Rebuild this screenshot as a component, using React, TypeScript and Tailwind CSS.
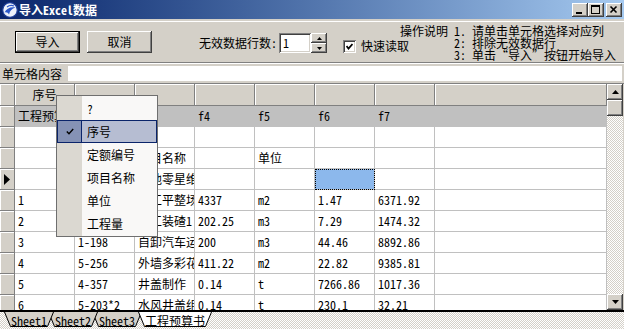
import React from 'react';

const raised =
  'shadow-[inset_-1px_-1px_0_#404040,inset_1px_1px_0_#ffffff,inset_-2px_-2px_0_#808080,inset_2px_2px_0_#d4d0c8]';
const sunken =
  'shadow-[inset_1px_1px_0_#808080,inset_-1px_-1px_0_#ffffff,inset_2px_2px_0_#404040,inset_-2px_-2px_0_#d4d0c8]';
const hatch = 'bg-[repeating-conic-gradient(#d4d0c8_0_25%,#ffffff_0_50%)] bg-[length:2px_2px]';
const headCell = 'bg-[#d4d0c8] border-r border-b border-[#808080] shadow-[inset_1px_1px_0_#ffffff]';

type Row = { cells: string[]; gray?: boolean; current?: boolean; selected?: number };

const rows: Row[] = [
  { cells: ['工程预算书', '', '', 'f4', 'f5', 'f6', 'f7', ''], gray: true },
  { cells: ['', '', '', '', '', '', '', ''] },
  { cells: ['', '定额编号', '项目名称', '', '单位', '', '', ''] },
  { cells: ['', '', '其他零星维修', '', '', '', '', ''], current: true, selected: 5 },
  { cells: ['1', '1-1', '人工平整场地', '4337', 'm2', '1.47', '6371.92', ''] },
  { cells: ['2', '1-47', '人工装碴1', '202.25', 'm3', '7.29', '1474.32', ''] },
  { cells: ['3', '1-198', '自卸汽车运土', '200', 'm3', '44.46', '8892.86', ''] },
  { cells: ['4', '5-256', '外墙多彩花纹涂料', '411.22', 'm2', '22.82', '9385.81', ''] },
  { cells: ['5', '4-357', '井盖制作', '0.14', 't', '7266.86', '1017.36', ''] },
  { cells: ['6', '5-203*2', '水风井盖组装', '0.14', 't', '230.1', '32.21', ''] },
];

const menuItems = ['?', '序号', '定额编号', '项目名称', '单位', '工程量'];

const colW = (i: number) => (i === 7 ? 'w-[172px]' : 'w-[60px]');

function AppIcon() {
  return (
    <svg width="16" height="16" viewBox="0 0 16 16">
      <circle cx="8" cy="8" r="7.3" fill="#eef2fb" stroke="#1c3c98" strokeWidth="1.2" />
      <path d="M2.5 10.5 C4.5 6.5 8.5 4.5 13.5 5.5 C10 6.5 8 8.5 7 12.5 C6 10.5 4.5 10 2.5 10.5 Z" fill="#2c58c9" />
      <path d="M5 5 C7 3.5 10 3.2 12 4" stroke="#2c58c9" strokeWidth="1.2" fill="none" />
    </svg>
  );
}

function WinBtn({ kind }: { kind: 'min' | 'max' | 'close' }) {
  return (
    <div className={`w-[16px] h-[14px] bg-[#d4d0c8] ${raised} flex items-center justify-center`}>
      <svg width="16" height="14" viewBox="0 0 16 14">
        {kind === 'min' && <rect x="4" y="9" width="6" height="2" fill="#000" />}
        {kind === 'max' && (
          <g fill="none" stroke="#000">
            <rect x="3.5" y="2.5" width="8" height="8" />
            <line x1="3" y1="3.5" x2="12" y2="3.5" />
          </g>
        )}
        {kind === 'close' && (
          <g stroke="#000" strokeWidth="1.6">
            <line x1="4.5" y1="3.5" x2="10.5" y2="9.5" />
            <line x1="10.5" y1="3.5" x2="4.5" y2="9.5" />
          </g>
        )}
      </svg>
    </div>
  );
}

function Arrow({ dir }: { dir: 'up' | 'down' }) {
  return (
    <svg width="7" height="4" viewBox="0 0 7 4">
      <polygon points={dir === 'up' ? '3.5,0 7,4 0,4' : '0,0 7,0 3.5,4'} fill="#000" />
    </svg>
  );
}

function Tab({ label, w, active, z, first }: { label: string; w: number; active?: boolean; z: string; first?: boolean }) {
  const pts = `0.5,0 6.5,14.5 ${w - 6.5},14.5 ${w - 0.5},0`;
  return (
    <div
      className={`relative h-[16px] flex items-center justify-center ${z} ${first ? '' : active ? '-ml-[4px]' : '-ml-[6px]'}`}
      style={{ width: w }}
    >
      <svg className="absolute inset-0" width={w} height="16" viewBox={`0 0 ${w} 16`}>
        <polygon points={pts} fill={active ? '#ffffff' : '#d4d0c8'} />
        <polyline points={pts} fill="none" stroke="#000" />
      </svg>
      <span className="relative leading-[14px] mt-[1px]">{label}</span>
    </div>
  );
}

export default function App() {
  return (
    <div className="relative w-[624px] h-[329px] overflow-hidden bg-[#d4d0c8] flex flex-col text-[12px] leading-[14px] text-black font-['Noto_Sans_Mono_CJK_SC','Noto_Sans_CJK_SC',sans-serif]">
      {/* title bar */}
      <div className="h-[19px] shrink-0 flex items-center bg-linear-to-r from-[#0a246a] to-[#a6caf0] px-[2px]">
        <AppIcon />
        <span className="ml-[1px] text-white font-bold">导入Excel数据</span>
        <div className="ml-auto flex items-center">
          <WinBtn kind="min" />
          <WinBtn kind="max" />
          <div className="w-[2px]" />
          <WinBtn kind="close" />
        </div>
      </div>

      {/* toolbar */}
      <div className="mt-[2px] h-[43px] shrink-0 flex items-start border-b border-white shadow-[inset_0_1px_0_#ffffff,inset_0_-1px_0_#808080]">
        <div className="ml-[15px] mt-[10px] w-[65px] h-[22px] border border-black">
          <div className={`w-full h-full flex items-center justify-center ${raised}`}>导入</div>
        </div>
        <div className={`ml-[7px] mt-[10px] w-[65px] h-[22px] flex items-center justify-center ${raised}`}>取消</div>
        <div className="ml-[47px] mt-[15px] w-[78px] whitespace-nowrap">无效数据行数:</div>
        <div className={`ml-[2px] mt-[12px] w-[32px] h-[20px] bg-white ${sunken} flex items-center pl-[4px]`}>1</div>
        <div className="mt-[12px] w-[16px] h-[20px] flex flex-col">
          <div className={`h-[10px] flex items-center justify-center ${raised}`}>
            <svg width="5" height="3" viewBox="0 0 5 3"><polygon points="2.5,0 5,3 0,3" fill="#000" /></svg>
          </div>
          <div className={`h-[10px] flex items-center justify-center ${raised}`}>
            <svg width="5" height="3" viewBox="0 0 5 3"><polygon points="0,0 5,0 2.5,3" fill="#000" /></svg>
          </div>
        </div>
        <div className="ml-[16px] mt-[18px] w-[57px] flex items-center whitespace-nowrap">
          <div className={`w-[13px] h-[13px] shrink-0 bg-white ${sunken} flex items-center justify-center`}>
            <svg width="7" height="7" viewBox="0 0 7 7">
              <polyline points="0.5,3 2.5,5.5 6.5,1" fill="none" stroke="#000" strokeWidth="1.8" />
            </svg>
          </div>
          <span className="ml-[5px]">快速读取</span>
        </div>
        <div className="mt-[4px] grid grid-cols-[54px_18px_auto] leading-[12px] whitespace-nowrap">
          <span>操作说明</span>
          <span>1.</span>
          <span>请单击单元格选择对应列</span>
          <span />
          <span>2:</span>
          <span>排除无效数据行</span>
          <span />
          <span>3:</span>
          <span>
            单击<span className="inline-block w-[12px] text-right">“</span>导入
            <span className="inline-block w-[12px] text-left">”</span>按钮开始导入
          </span>
        </div>
      </div>

      {/* cell content */}
      <div className="h-[19px] shrink-0 flex items-center">
        <span className="pl-[2px] w-[68px] shrink-0">单元格内容</span>
        <div className="flex-1 h-[15px] bg-white mr-[2px]" />
      </div>

      {/* grid */}
      <div className="h-[227px] shrink-0 flex border-t border-[#808080]">
        <div className="w-[607px] shrink-0 flex flex-col overflow-hidden bg-white">
          <div className="h-[22px] shrink-0 flex">
            <div className={`w-[15px] shrink-0 ${headCell}`} />
            {rows[0].cells.map((_, i) => (
              <div key={i} className={`${colW(i)} shrink-0 ${headCell} flex items-center justify-center`}>
                {i === 0 ? '序号' : ''}
              </div>
            ))}
          </div>
          {rows.map((r, ri) => (
            <div key={ri} className="h-[21px] shrink-0 flex">
              <div className={`w-[15px] shrink-0 ${headCell} flex items-center pl-[4px]`}>
                {r.current && (
                  <svg width="6" height="11" viewBox="0 0 6 11">
                    <polygon points="0,0 6,5.5 0,11" fill="#000" />
                  </svg>
                )}
              </div>
              {r.cells.map((c, i) => (
                <div
                  key={i}
                  className={`${colW(i)} shrink-0 h-full border-r border-b border-[#c0c0c0] pl-[3px] flex items-center whitespace-nowrap ${
                    r.gray ? 'bg-[#c0c0c0]' : ''
                  } ${r.gray && i === 0 ? 'overflow-visible relative z-[1]' : 'overflow-hidden'} ${
                    r.selected === i ? 'bg-[#8cb8ec] outline-1 outline-dotted outline-black -outline-offset-1' : ''
                  }`}
                >
                  {c}
                </div>
              ))}
            </div>
          ))}
        </div>
        {/* vertical scrollbar */}
        <div className="w-[16px] shrink-0 flex flex-col">
          <div className={`h-[16px] shrink-0 bg-[#d4d0c8] ${raised} flex items-center justify-center`}>
            <Arrow dir="up" />
          </div>
          <div className={`h-[16px] shrink-0 bg-[#d4d0c8] ${raised}`} />
          <div className={`flex-1 ${hatch}`} />
          <div className={`h-[16px] shrink-0 bg-[#d4d0c8] ${raised} flex items-center justify-center`}>
            <Arrow dir="down" />
          </div>
        </div>
        <div className="w-[1px] shrink-0 bg-[#d4d0c8]" />
      </div>

      {/* sheet tabs */}
      <div className="h-[2px] shrink-0 border-t border-[#404040] border-b border-black" />
      <div className={`flex-1 flex items-start pl-[4px] ${hatch}`}>
        <Tab label="Sheet1" w={50} z="z-[4]" first />
        <Tab label="Sheet2" w={50} z="z-[3]" />
        <Tab label="Sheet3" w={50} z="z-[2]" />
        <Tab label="工程预算书" w={74} z="z-[5]" active />
      </div>

      {/* column chooser popup */}
      <div className="absolute left-[56px] top-[95px] w-[102px] border border-[#6f6f6f] py-[1px] bg-[linear-gradient(to_right,#dbd8d1_25px,#f9f8f7_25px)] z-10">
        {menuItems.map((t, i) =>
          i === 1 ? (
            <div key={t} className="h-[23px] flex border border-[#0a246a] bg-[#b6bdd2]">
              <div className="w-[24px] shrink-0 bg-[#8592b5] border-r border-[#0a246a] flex items-center justify-center">
                <svg width="8" height="7" viewBox="0 0 8 7">
                  <polyline points="0.8,3.5 3,5.8 7.2,1" fill="none" stroke="#000" strokeWidth="1.4" />
                </svg>
              </div>
              <span className="ml-[5px] self-center">{t}</span>
            </div>
          ) : (
            <div key={t} className="h-[23px] flex items-center pl-[30px]">
              {t}
            </div>
          ),
        )}
      </div>
    </div>
  );
}
